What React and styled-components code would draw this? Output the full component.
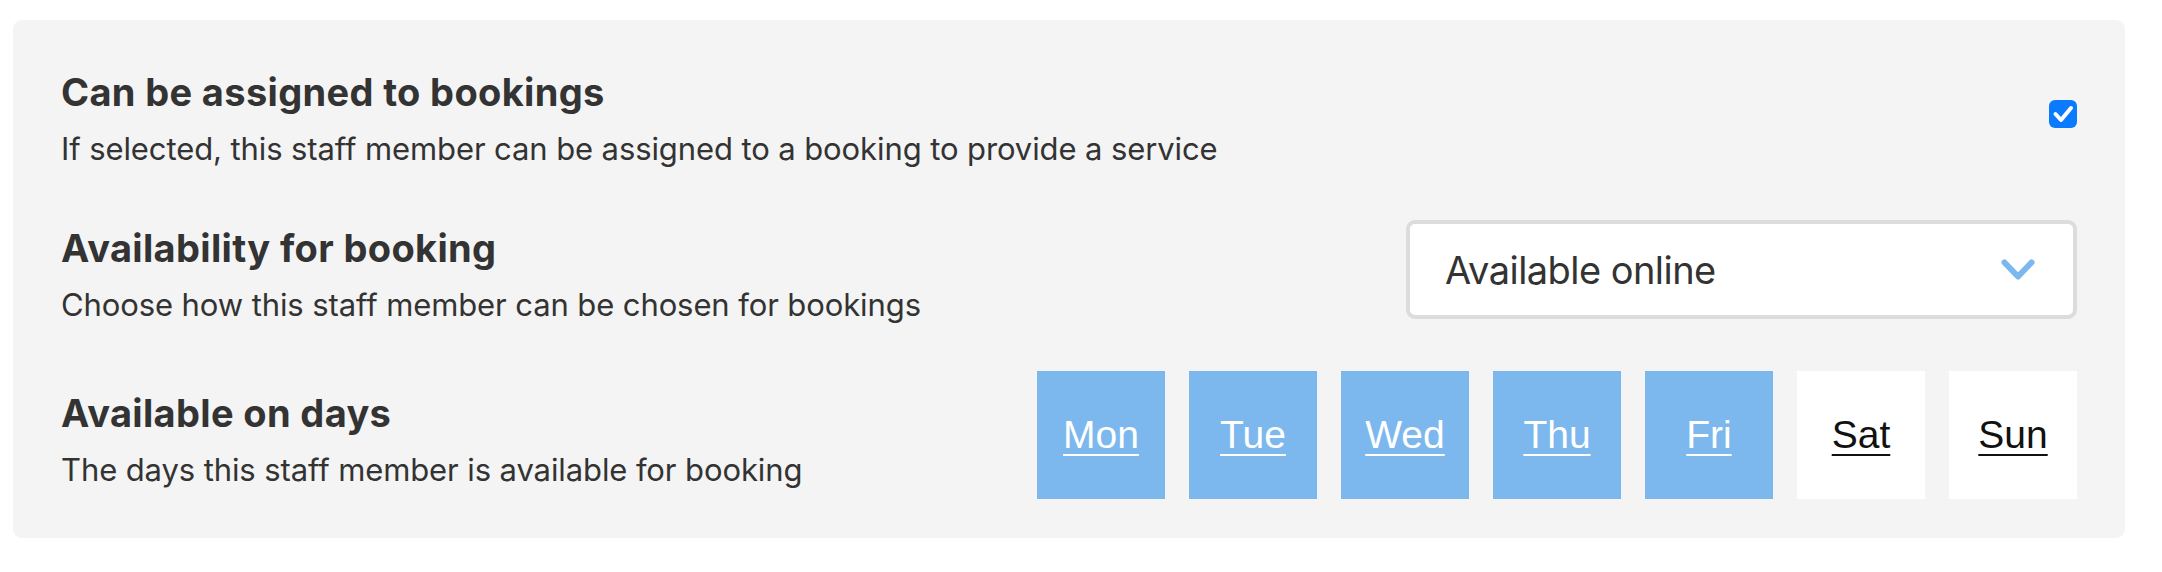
import React, { useState } from "react";
import styled, { createGlobalStyle } from "styled-components";

const GlobalStyle = createGlobalStyle`
  html, body {
    margin: 0;
    padding: 0;
    background: #ffffff;
  }
  body {
    font-family: Inter, "Noto Sans", "Liberation Sans", sans-serif;
    -webkit-font-smoothing: antialiased;
  }
`;

const Page = styled.div`
  padding: 20px 37px 33px 13px;
`;

const Panel = styled.section`
  width: 2112px;
  box-sizing: border-box;
  background: #f4f4f4;
  border-radius: 9px;
  padding: 39px 48px 39px 48px;
  display: flex;
  flex-direction: column;
  gap: 46.5px;
`;

const Row = styled.div`
  display: flex;
  justify-content: space-between;
  align-items: center;
`;

const TextBlock = styled.div`
  padding-top: 11px;
  display: flex;
  flex-direction: column;
`;

const Title = styled.h3`
  margin: 0;
  font-family: Inter, "Noto Sans", sans-serif;
  font-weight: 700;
  font-size: 38px;
  line-height: 44px;
  color: #333333;
  letter-spacing: 0.35px;
`;

const Description = styled.p`
  margin: 14.5px 0 0 0;
  font-family: Inter, "Noto Sans", sans-serif;
  font-weight: 400;
  font-size: 31px;
  line-height: 40px;
  color: #333333;
  letter-spacing: -0.1px;
`;

const CheckboxBox = styled.div`
  width: 28px;
  height: 28px;
  border-radius: 6px;
  background: ${(p) => (p.$checked ? "#0a7aff" : "#ffffff")};
  display: flex;
  align-items: center;
  justify-content: center;
  cursor: pointer;
`;

const SelectBox = styled.div`
  width: 671px;
  height: 99px;
  box-sizing: border-box;
  background: #ffffff;
  border: 4px solid #dcdcdc;
  border-radius: 9px;
  padding: 0 38px 0 35px;
  display: flex;
  align-items: center;
  justify-content: space-between;
  cursor: pointer;
`;

const SelectText = styled.span`
  font-family: Inter, "Noto Sans", sans-serif;
  font-size: 38px;
  font-weight: 400;
  color: #333333;
  letter-spacing: -0.55px;
`;

const Days = styled.div`
  display: flex;
  gap: 24px;
`;

const DayButton = styled.button`
  width: 128px;
  height: 128px;
  border: none;
  padding: 0;
  margin: 0;
  background: ${(p) => (p.$active ? "#7cb8ee" : "#ffffff")};
  color: ${(p) => (p.$active ? "#ffffff" : "#111111")};
  font-family: "Liberation Sans", Arial, sans-serif;
  font-size: 39px;
  font-weight: 400;
  text-decoration: underline;
  text-decoration-thickness: 2px;
  text-underline-offset: 6px;
  display: flex;
  align-items: center;
  justify-content: center;
  cursor: pointer;
`;

const Check = () => (
  <svg width="28" height="28" viewBox="0 0 28 28" aria-hidden="true">
    <polyline
      points="6.5,14 12,20 22,8"
      fill="none"
      stroke="#ffffff"
      strokeWidth="4"
      strokeLinecap="round"
      strokeLinejoin="round"
    />
  </svg>
);

const Chevron = () => (
  <svg width="34" height="22" viewBox="0 0 34 22" aria-hidden="true">
    <polyline
      points="3.5,3.5 17,17.5 30.5,3.5"
      fill="none"
      stroke="#7cb8ee"
      strokeWidth="6"
      strokeLinecap="round"
      strokeLinejoin="round"
    />
  </svg>
);

const DAYS = [
  { label: "Mon", on: true },
  { label: "Tue", on: true },
  { label: "Wed", on: true },
  { label: "Thu", on: true },
  { label: "Fri", on: true },
  { label: "Sat", on: false },
  { label: "Sun", on: false },
];

export default function App() {
  const [assignable, setAssignable] = useState(true);
  const [days, setDays] = useState(DAYS);

  return (
    <Page>
      <GlobalStyle />
      <Panel>
        <Row>
          <TextBlock>
            <Title>Can be assigned to bookings</Title>
            <Description>
              If selected, this staff member can be assigned to a booking to provide a service
            </Description>
          </TextBlock>
          <CheckboxBox
            role="checkbox"
            aria-checked={assignable}
            $checked={assignable}
            onClick={() => setAssignable(!assignable)}
          >
            {assignable && <Check />}
          </CheckboxBox>
        </Row>
        <Row>
          <TextBlock>
            <Title>Availability for booking</Title>
            <Description>Choose how this staff member can be chosen for bookings</Description>
          </TextBlock>
          <SelectBox role="combobox">
            <SelectText>Available online</SelectText>
            <Chevron />
          </SelectBox>
        </Row>
        <Row>
          <TextBlock>
            <Title>Available on days</Title>
            <Description>The days this staff member is available for booking</Description>
          </TextBlock>
          <Days>
            {days.map((d, i) => (
              <DayButton
                key={d.label}
                $active={d.on}
                onClick={() =>
                  setDays(days.map((x, j) => (j === i ? { ...x, on: !x.on } : x)))
                }
              >
                {d.label}
              </DayButton>
            ))}
          </Days>
        </Row>
      </Panel>
    </Page>
  );
}
